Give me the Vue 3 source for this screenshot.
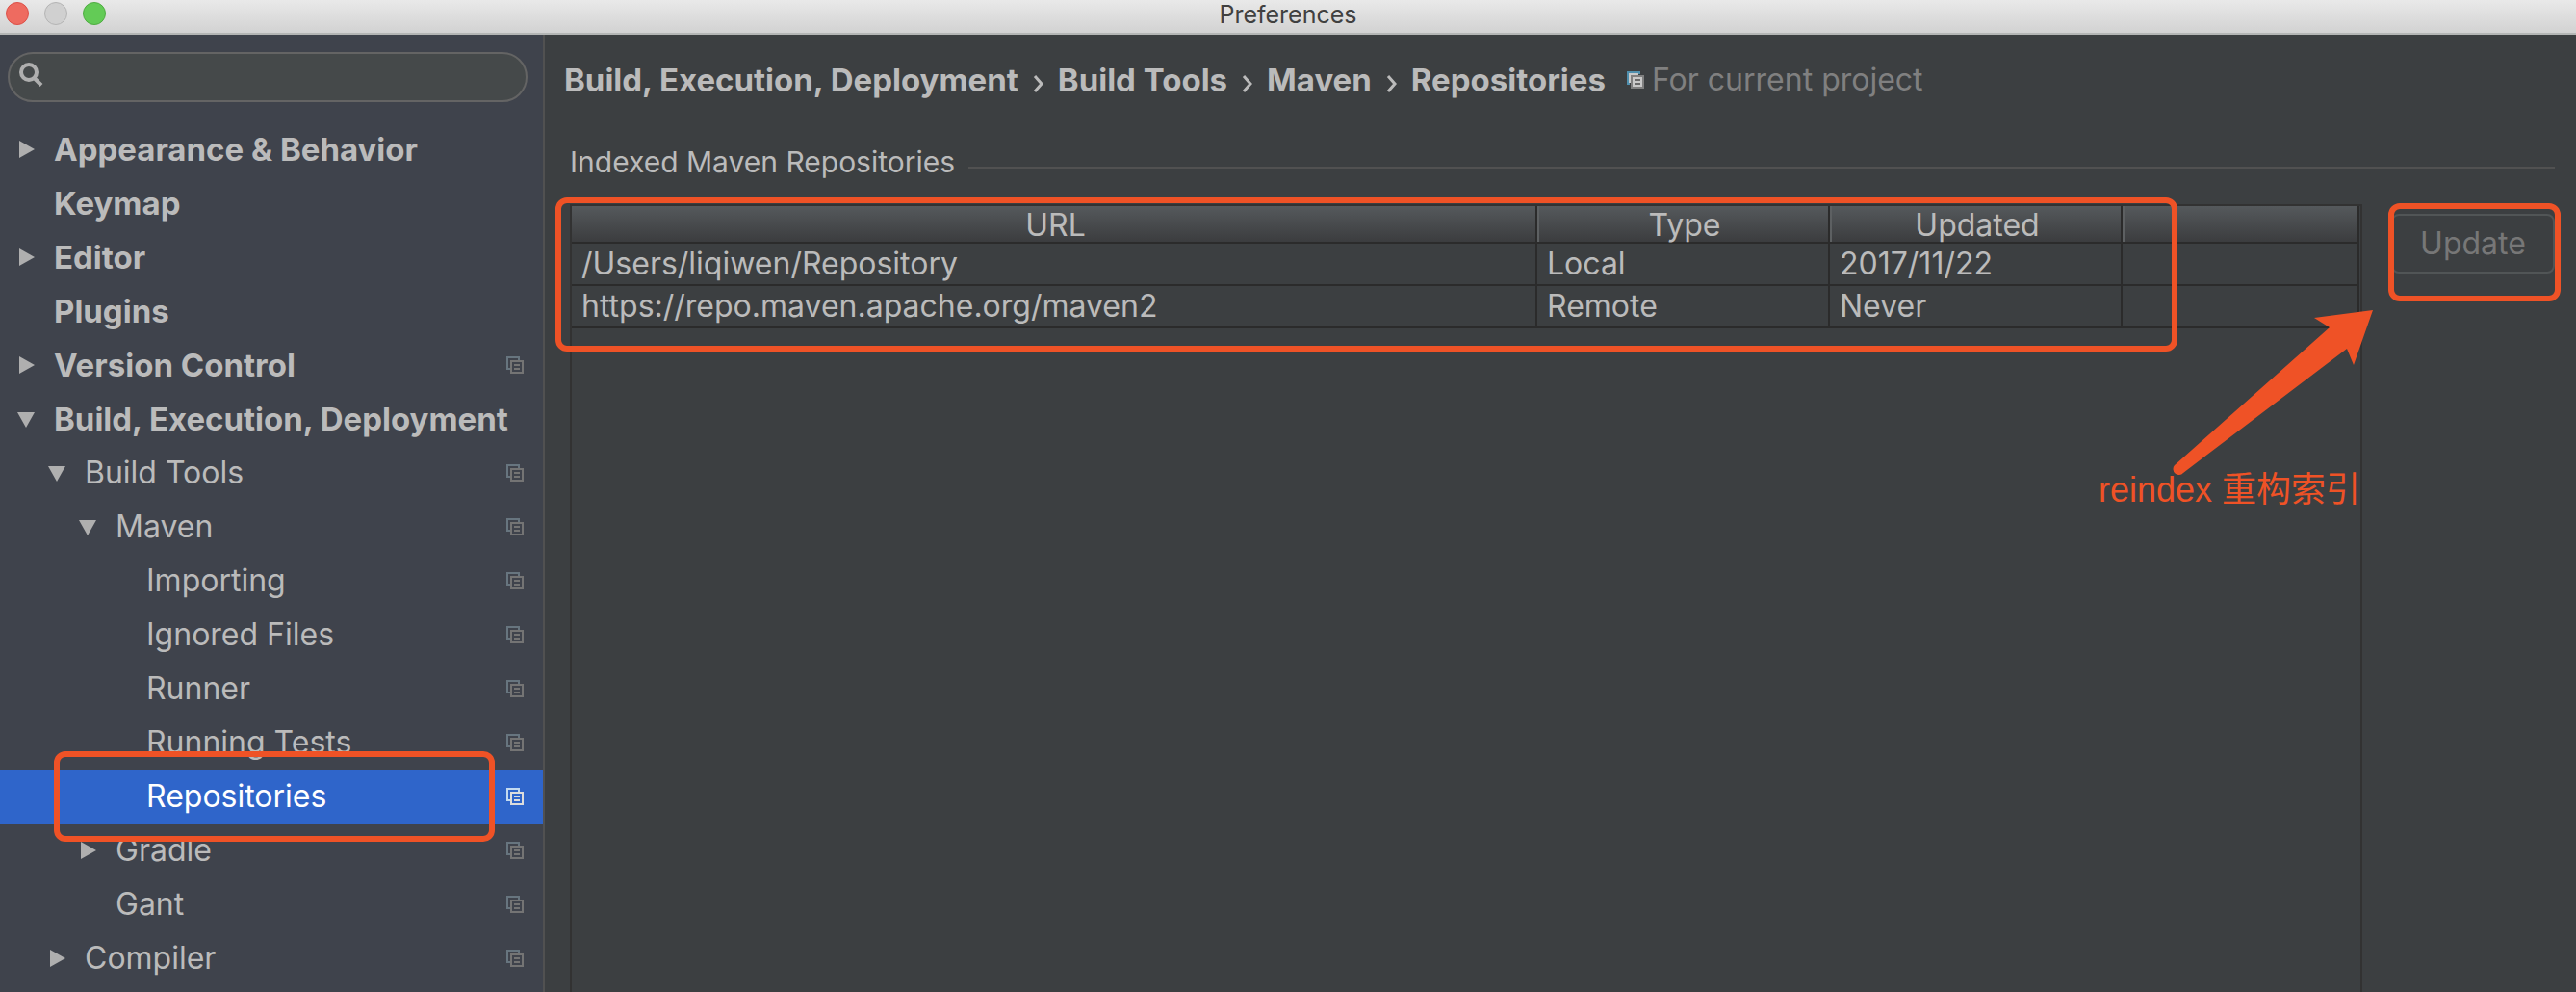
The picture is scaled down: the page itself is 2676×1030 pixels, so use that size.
<script setup>
import { ref } from 'vue'

const query = ref('')

const tree = [
  { label: 'Appearance & Behavior', level: 0, arrow: 'right', bold: true },
  { label: 'Keymap', level: 0, bold: true },
  { label: 'Editor', level: 0, arrow: 'right', bold: true },
  { label: 'Plugins', level: 0, bold: true },
  { label: 'Version Control', level: 0, arrow: 'right', bold: true, project: true },
  { label: 'Build, Execution, Deployment', level: 0, arrow: 'down', bold: true },
  { label: 'Build Tools', level: 1, arrow: 'down', project: true },
  { label: 'Maven', level: 2, arrow: 'down', project: true },
  { label: 'Importing', level: 3, project: true },
  { label: 'Ignored Files', level: 3, project: true },
  { label: 'Runner', level: 3, project: true },
  { label: 'Running Tests', level: 3, project: true },
  { label: 'Repositories', level: 3, project: true, selected: true },
  { label: 'Gradle', level: 2, arrow: 'right', project: true },
  { label: 'Gant', level: 2, project: true },
  { label: 'Compiler', level: 1, arrow: 'right', project: true },
]

const crumbs = ['Build, Execution, Deployment', 'Build Tools', 'Maven', 'Repositories']

const repositories = [
  { url: '/Users/liqiwen/Repository', type: 'Local', updated: '2017/11/22' },
  { url: 'https://repo.maven.apache.org/maven2', type: 'Remote', updated: 'Never' },
]
</script>

<template>
  <div class="window">
    <header class="titlebar">
      <div class="lights">
        <button class="light close" type="button" aria-label="Close"></button>
        <button class="light minimize" type="button" aria-label="Minimize"></button>
        <button class="light zoom" type="button" aria-label="Zoom"></button>
      </div>
      <h1 class="title">Preferences</h1>
    </header>

    <div class="body">
      <aside class="sidebar">
        <label class="search">
          <svg class="search-icon" width="26" height="26" viewBox="0 0 26 26" aria-hidden="true">
            <circle cx="10" cy="10" r="8" fill="none" stroke="#afafaf" stroke-width="4" />
            <path d="M15.5 16 L23 23.5" stroke="#afafaf" stroke-width="4" />
          </svg>
          <input v-model="query" type="text" aria-label="Search settings" />
        </label>

        <ul class="tree">
          <li v-for="item in tree" :key="item.label" class="row" :class="{ selected: item.selected }">
            <button class="node" :class="['level-' + item.level, { bold: item.bold }]" type="button">
              <span class="arrow">
                <svg v-if="item.arrow === 'right'" width="18" height="18" viewBox="0 0 18 18" aria-hidden="true">
                  <path d="M2 0 L18 9 L2 18 Z" fill="#afafaf" />
                </svg>
                <svg v-else-if="item.arrow === 'down'" width="18" height="18" viewBox="0 0 18 18" aria-hidden="true">
                  <path d="M0 2 H18 L9 18 Z" fill="#afafaf" />
                </svg>
              </span>
              <span class="label">{{ item.label }}</span>
            </button>
            <svg v-if="item.project" class="project-icon" width="18" height="18" viewBox="0 0 18 18" aria-hidden="true">
              <path class="back" d="M4 13 H1 V1 H13 V4" />
              <path class="front" d="M5 5 H17 V17 H5 Z M8 9 H14 M8 13 H14" />
            </svg>
            <span v-if="item.selected" class="mark mark-row"></span>
          </li>
        </ul>
      </aside>

      <main class="content">
        <nav class="crumbs" aria-label="Settings path">
          <template v-for="(crumb, i) in crumbs" :key="crumb">
            <svg v-if="i" class="chevron" width="12" height="18" viewBox="0 0 12 18" aria-hidden="true">
              <path d="M2 1 L9 9 L2 17" fill="none" stroke="#bbbbbb" stroke-width="3" />
            </svg>
            <span class="crumb">{{ crumb }}</span>
          </template>
          <svg class="scope-icon" width="18" height="18" viewBox="0 0 18 18" aria-hidden="true">
            <path d="M1 1 H13 V13 H1 Z" fill="#c9c9c9" stroke="#4f8fae" stroke-width="2" />
            <path d="M3 3 H15 V15 H3 Z" fill="#3c3f41" />
            <path d="M2 2 H12 V4 H4 V12 H2 Z" fill="#c9c9c9" />
            <path d="M5 5 H17 V17 H5 Z" fill="#c9c9c9" stroke="#808080" stroke-width="2" />
            <path d="M8 9 H14 M8 13 H14" stroke="#6a6a6a" stroke-width="2" />
          </svg>
          <span class="scope">For current project</span>
        </nav>

        <section class="group">
          <h2 class="group-title">Indexed Maven Repositories</h2>

          <div class="panel">
            <div class="table-box">
              <table>
                <colgroup>
                  <col />
                  <col class="col-mid" />
                  <col class="col-mid" />
                  <col class="col-end" />
                </colgroup>
                <thead>
                  <tr>
                    <th scope="col">URL</th>
                    <th scope="col">Type</th>
                    <th scope="col">Updated</th>
                    <td></td>
                  </tr>
                </thead>
                <tbody>
                  <tr v-for="repo in repositories" :key="repo.url">
                    <td>{{ repo.url }}</td>
                    <td>{{ repo.type }}</td>
                    <td>{{ repo.updated }}</td>
                    <td></td>
                  </tr>
                </tbody>
              </table>
              <span class="mark mark-table"></span>
              <div class="note">
                <svg class="note-arrow" width="212" height="172" viewBox="0 0 212 172" aria-hidden="true">
                  <path
                    d="M209 1 L148 9 L164 19 L3 162 A6 6 0 0 0 12 170 L182 41 L189 58 Z"
                    fill="#ef5226"
                  />
                </svg>
                <p class="note-text">reindex 重构索引</p>
              </div>
            </div>

            <div class="actions">
              <button class="update" type="button" disabled>Update</button>
              <span class="mark mark-update"></span>
            </div>
          </div>
        </section>
      </main>
    </div>
  </div>
</template>

<style>
body {
  margin: 0;
  background: #3c3f41;
}
</style>

<style scoped>
* {
  box-sizing: border-box;
}

.window {
  display: flex;
  flex-direction: column;
  min-height: 100vh;
  overflow: hidden;
  background: #3c3f41;
  color: #bbbbbb;
  font-family: Inter, "Noto Sans CJK SC", sans-serif;
  font-size: 32px;
  line-height: 40px;
}

button,
input {
  margin: 0;
  padding: 0;
  border: 0;
  background: none;
  color: inherit;
  font: inherit;
}

.titlebar {
  display: grid;
  grid-template-columns: 1fr auto 1fr;
  height: 36px;
  border-bottom: 2px solid #b4b6b5;
  background: linear-gradient(#e9e9e9, #d2d2d2);
}

.lights {
  display: flex;
  gap: 16px;
  padding: 2px 6px;
}

.light {
  width: 24px;
  height: 24px;
  border: 1px solid #b4b4b4;
  border-radius: 50%;
  background: #d0d0d0;
}

.close {
  border-color: #dc5048;
  background: #ee6b60;
}

.zoom {
  border-color: #4fac42;
  background: #63cb56;
}

.title {
  margin: 0;
  color: #404040;
  font-size: 25px;
  font-weight: 400;
  line-height: 30px;
}

.body {
  display: flex;
  flex: 1;
}

.sidebar {
  flex: none;
  width: 566px;
  padding-top: 18px;
  border-right: 2px solid #515151;
  background: #3f434c;
}

.search {
  display: flex;
  align-items: center;
  gap: 8px;
  height: 52px;
  margin: 0 16px 22px 8px;
  padding: 0 10px;
  border: 2px solid #646464;
  border-radius: 26px;
  background: #45494a;
}

.search-icon {
  flex: none;
  margin-bottom: 4px;
}

.search input {
  flex: 1;
  min-width: 0;
  outline: none;
}

.tree {
  margin: 0;
  padding: 0;
  list-style: none;
}

.row {
  position: relative;
  display: flex;
  align-items: center;
  height: 56px;
  padding: 0 20px 2px 0;
}

.row.selected {
  z-index: 1;
  background: #2f65ca;
  color: #ffffff;
}

.node {
  display: flex;
  flex: 1;
  align-items: center;
  gap: 20px;
  min-width: 0;
  height: 100%;
  padding-left: 18px;
  text-align: left;
  white-space: nowrap;
}

.level-1 {
  padding-left: 50px;
}

.level-2 {
  padding-left: 82px;
}

.level-3 {
  padding-left: 114px;
}

.bold {
  font-size: 33px;
  font-weight: 700;
}

.arrow {
  display: flex;
  flex: none;
  width: 18px;
}

.project-icon {
  flex: none;
  fill: none;
  stroke-width: 2;
}

.back {
  stroke: #67757f;
}

.front {
  stroke: #747474;
}

.selected .back {
  stroke: #c3daf0;
}

.selected .front {
  stroke: #dcdcdc;
}

.mark {
  position: absolute;
  border: 6px solid #ef5226;
  border-radius: 12px;
  pointer-events: none;
}

.mark-row {
  inset: -20px 50px -18px 56px;
}

.content {
  display: flex;
  flex: 1;
  flex-direction: column;
  min-width: 0;
  padding: 26px 22px 0 20px;
}

.crumbs {
  display: flex;
  align-items: center;
  height: 42px;
  font-size: 33px;
  font-weight: 700;
  white-space: nowrap;
}

.chevron {
  margin: 8px 14px 0 15px;
}

.scope-icon {
  margin: 0 8px 0 22px;
}

.scope {
  color: #808080;
  font-size: 32px;
  font-weight: 400;
}

.group {
  display: flex;
  flex: 1;
  flex-direction: column;
  padding: 44px 0 0 6px;
}

.group-title {
  display: flex;
  align-items: center;
  gap: 14px;
  margin: 0;
  font-size: 30px;
  font-weight: 400;
}

.group-title::after {
  flex: 1;
  height: 2px;
  margin-top: 12px;
  background: #515151;
  content: "";
}

.panel {
  display: flex;
  flex: 1;
  align-items: flex-start;
  gap: 30px;
  padding-top: 24px;
}

.table-box {
  position: relative;
  flex: 1;
  align-self: stretch;
  padding-right: 1px;
  border: 2px solid #323232;
  border-bottom: 0;
}

table {
  width: 100%;
  border-spacing: 0;
  table-layout: fixed;
}

.col-mid {
  width: 304px;
}

.col-end {
  width: 246px;
}

thead {
  background: linear-gradient(#55595c, #3a3b3d);
}

th,
td {
  height: 44px;
  padding: 0 0 0 10px;
  border-right: 2px solid #2b2b2b;
  border-bottom: 2px solid #2b2b2b;
  font-weight: 400;
  line-height: 40px;
  text-align: left;
}

thead th,
thead td {
  height: 39px;
  padding: 2px 0 0 4px;
  line-height: 35px;
  text-align: center;
}

thead th + th,
thead td {
  box-shadow: inset 2px 0 #5d6062;
}

.actions {
  position: relative;
  padding-top: 10px;
}

.update {
  display: block;
  width: 170px;
  height: 62px;
  border: 2px solid #515556;
  border-radius: 8px;
  color: #777777;
}

.mark-table {
  top: -9px;
  right: 190px;
  left: -17px;
  height: 160px;
}

.mark-update {
  inset: -1px -6px -29px -3px;
}

.note {
  position: absolute;
  top: 107px;
  right: -14px;
  width: 286px;
}

.note-arrow {
  display: block;
  margin-left: 76px;
}

.note-text {
  margin: -8px 0 0;
  color: #ef5226;
  font-family: "Liberation Sans", "Noto Sans CJK SC", sans-serif;
  font-size: 36px;
  line-height: 48px;
  white-space: nowrap;
}
</style>
